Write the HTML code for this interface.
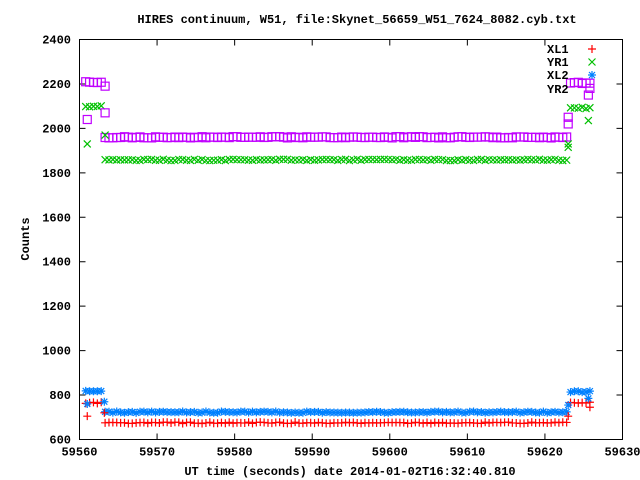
<!DOCTYPE html>
<html><head><meta charset="utf-8"><style>
body{margin:0;background:#fff;}
svg{display:block;font-family:"Liberation Mono",monospace;font-weight:bold;font-size:12px;}
</style></head><body>
<svg id="s" width="640" height="480" xmlns="http://www.w3.org/2000/svg">
<rect width="640" height="480" fill="#fff"/>
<text x="357" y="23" text-anchor="middle">HIRES continuum, W51, file:Skynet_56659_W51_7624_8082.cyb.txt</text>
<text x="350" y="475" text-anchor="middle">UT time (seconds) date 2014-01-02T16:32:40.810</text>
<text transform="translate(29,239) rotate(-90)" text-anchor="middle">Counts</text>
<g id="ax" stroke="#000" fill="none"></g>
<g id="lb"></g>
<g id="pts" fill="none" stroke-width="1.2"></g>
<g font-size="12">
<text x="547" y="53">XL1</text><text x="547" y="66">YR1</text><text x="547" y="79">XL2</text><text x="547" y="93">YR2</text>
</g>
</svg>
<script>
var NS="http://www.w3.org/2000/svg";
function el(p,t,a){var e=document.createElementNS(NS,t);for(var k in a)e.setAttribute(k,a[k]);p.appendChild(e);return e;}
var L=79.5,R=622.5,T=39.5,B=439.5;
function X(t){return L+(t-59560)*(R-L)/70;}
function Y(v){return T+(2400-v)*(B-T)/1800;}
var ax=document.getElementById('ax'),lb=document.getElementById('lb');
el(ax,'rect',{x:L,y:T,width:R-L,height:B-T});
for(var v=600;v<=2400;v+=200){var y=Y(v);el(ax,'path',{d:'M'+L+' '+y+'h6M'+R+' '+y+'h-6'});var t=el(lb,'text',{x:71,y:y+4,'text-anchor':'end'});t.textContent=v;}
for(var s=59560;s<=59630;s+=10){var x=X(s);el(ax,'path',{d:'M'+x+' '+B+'v-6M'+x+' '+T+'v6'});var t=el(lb,'text',{x:x,y:B+16,'text-anchor':'middle'});t.textContent=s;}
var P=document.getElementById('pts');
function plus(x,y,c){el(P,'path',{d:'M'+(x-4)+' '+y+'h8M'+x+' '+(y-4)+'v8',stroke:c});}
function cross(x,y,c){el(P,'path',{d:'M'+(x-3.5)+' '+(y-3.5)+'l7 7M'+(x-3.5)+' '+(y+3.5)+'l7 -7',stroke:c});}
function star(x,y,c){el(P,'path',{d:'M'+(x-4)+' '+y+'h8M'+x+' '+(y-4)+'v8M'+(x-3)+' '+(y-3)+'l6 6M'+(x-3)+' '+(y+3)+'l6 -6',stroke:c});}
function sq(x,y,c){el(P,'rect',{x:x-4,y:y-4,width:8,height:8,stroke:c});}
var R_='#ff0000',G='#00c000',Bl='#0080ff',M='#c000ff';
function j(){return (Math.random()-0.5)*6;}
for(var t=59560.8;t<=59625.9;t+=0.5){
 var x=X(t),a,b,c,d;
 if(t<59563.3){a=765;b=2100;c=818;d=2208;}
 else if(t<59623){a=675;b=1858;c=723;d=1960;}
 else {a=765;b=2092;c=815;d=2205;}
 plus(x,Y(a+j()),R_);cross(x,Y(b+j()),G);star(x,Y(c+j()),Bl);sq(x,Y(d+j()),M);
}
plus(X(59561),Y(705),R_);plus(X(59563.2),Y(720),R_);plus(X(59623),Y(705),R_);plus(X(59625.8),Y(745),R_);
cross(X(59561),Y(1930),G);cross(X(59563.3),Y(1970),G);cross(X(59623),Y(1915),G);cross(X(59623),Y(1930),G);cross(X(59625.6),Y(2035),G);
star(X(59561),Y(760),Bl);star(X(59563.2),Y(770),Bl);star(X(59623),Y(755),Bl);star(X(59625.6),Y(785),Bl);
sq(X(59561),Y(2040),M);sq(X(59563.3),Y(2070),M);sq(X(59563.3),Y(2190),M);sq(X(59623),Y(2020),M);sq(X(59623),Y(2050),M);sq(X(59625.8),Y(2180),M);sq(X(59625.6),Y(2150),M);
plus(592,49,R_);cross(592,62,G);star(592,75,Bl);
</script>
</body></html>
